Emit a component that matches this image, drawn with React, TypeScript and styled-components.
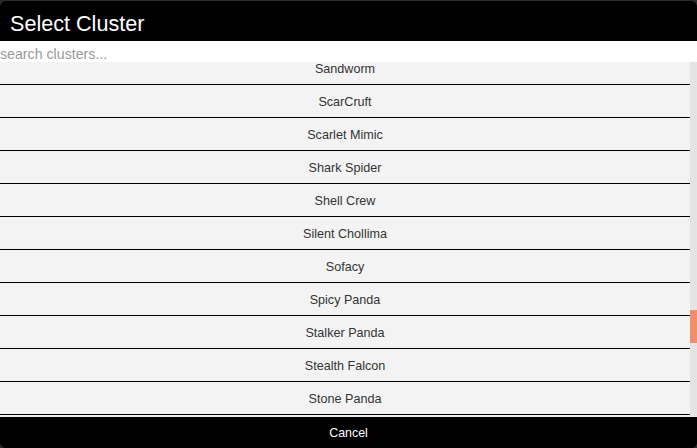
import React, { useEffect, useRef, useState } from 'react';
import styled, { createGlobalStyle } from 'styled-components';

const GlobalStyle = createGlobalStyle`
  html, body {
    margin: 0;
    padding: 0;
    background: #2b2b2b;
    overflow: hidden;
  }
  * {
    box-sizing: border-box;
  }
`;

const CLUSTERS = [
  'APT1', 'APT12', 'APT16', 'APT17', 'APT18', 'APT19', 'APT28', 'APT29', 'APT3', 'APT30',
  'APT32', 'APT33', 'APT34', 'APT37', 'APT38', 'APT39', 'Aquatic Panda', 'Axiom', 'Berserk Bear',
  'BlackOasis', 'BlackTech', 'Blue Termite', 'Bronze Butler', 'Carbanak', 'Charming Kitten',
  'Cleaver', 'Cobalt Group', 'Comment Crew', 'Copy-Kittens', 'Dark Caracal', 'Dark Hotel',
  'Deep Panda', 'DragonOK', 'Dragonfly', 'Dust Storm', 'Elderwood', 'Emissary Panda',
  'Equation Group', 'Fancy Bear', 'FIN10', 'FIN4', 'FIN5', 'FIN6', 'FIN7', 'FIN8', 'Gallmaker',
  'Gamaredon Group', 'Goblin Panda', 'Gorgon Group', 'Group5', 'Hexane', 'Honeybee',
  'Inception Framework', 'Ke3chang', 'Kimsuky', 'Lazarus Group', 'Leafminer', 'Leviathan',
  'Longhorn', 'Machete', 'Magic Hound', 'Menupass', 'Moafee', 'Molerats', 'MuddyWater',
  'Mustang Panda', 'Naikon', 'NEODYMIUM', 'Night Dragon', 'OilRig', 'Operation Wocao',
  'Orangeworm', 'PLATINUM', 'PROMETHIUM', 'Patchwork', 'PittyTiger',
  'Poseidon Group', 'Putter Panda', 'Rancor', 'Rocke', 'RTM', 'Sandworm', 'ScarCruft',
  'Scarlet Mimic', 'Shark Spider', 'Shell Crew', 'Silent Chollima', 'Sofacy', 'Spicy Panda',
  'Stalker Panda', 'Stealth Falcon', 'Stone Panda', 'Strider', 'Suckfly', 'TA459', 'TA505',
  'Taidoor', 'TEMP.Veles', 'The White Company', 'Threat Group-1314', 'Threat Group-3390', 'Thrip',
  'Tick', 'Tonto Team', 'Tropic Trooper', 'Turla', 'Vicious Panda', 'Volatile Cedar', 'Wet Panda',
  'Whitefly', 'Windshift', 'Winnti Group', 'Wizard Spider', 'Xenotime', 'Zebrocy', 'Zirconium',
];

const ROW_HEIGHT = 33;

const Overlay = styled.div`
  height: 448px;
  padding-top: 1px;
`;

const Dialog = styled.div`
  display: flex;
  flex-direction: column;
  height: 447px;
  background: #000;
  border-radius: 6px;
  overflow: hidden;
  font-family: 'Liberation Sans', Arial, sans-serif;
`;

const Header = styled.header`
  display: flex;
  align-items: center;
  height: 40px;
  flex-shrink: 0;
  padding: 5px 10px 0;
  color: #fff;
  font-size: 21.6px;
`;

const SearchInput = styled.input`
  display: block;
  width: 100%;
  height: 21px;
  flex-shrink: 0;
  margin: 0;
  padding: 4px 0 0;
  border: none;
  outline: none;
  background: #fff;
  color: #333;
  font-family: 'Liberation Sans', Arial, sans-serif;
  font-size: 14.2px;

  &::placeholder {
    color: #9a9a9a;
  }
`;

const ListArea = styled.div`
  display: flex;
  flex: 1;
  min-height: 0;
  background: #f3f3f3;
`;

const List = styled.ul`
  flex: 1;
  min-width: 0;
  margin: 0;
  padding: 0;
  list-style: none;
  overflow-y: scroll;
  scrollbar-width: none;

  &::-webkit-scrollbar {
    display: none;
  }
`;

const Track = styled.div`
  position: relative;
  width: 7px;
  flex-shrink: 0;
  background: #e4e4e4;
`;

const Thumb = styled.div`
  position: absolute;
  left: 0;
  right: 0;
  background: #f0906a;
`;

const Row = styled.li`
  display: flex;
  align-items: center;
  justify-content: center;
  height: ${ROW_HEIGHT}px;
  padding-top: 1px;
  border-bottom: 1px solid #000;
  color: #333;
  font-size: 12.6px;
  cursor: pointer;
`;

const Footer = styled.button`
  display: flex;
  align-items: center;
  justify-content: center;
  height: 32px;
  flex-shrink: 0;
  width: 100%;
  margin: 0;
  padding: 1px 0 0;
  border: none;
  border-top: 1px solid #e9e9e9;
  background: #000;
  color: #fff;
  font-family: 'Liberation Sans', Arial, sans-serif;
  font-size: 12.4px;
  cursor: pointer;
`;

export default function App() {
  const [query, setQuery] = useState('');
  const [thumb, setThumb] = useState({ top: 0, height: 0 });
  const listRef = useRef<HTMLUListElement>(null);

  const shown = CLUSTERS.filter((c) => c.toLowerCase().includes(query.toLowerCase()));

  const updateThumb = () => {
    const el = listRef.current;
    if (!el) return;
    const ratio = el.clientHeight / el.scrollHeight;
    setThumb({
      top: el.scrollTop * ratio,
      height: ratio >= 1 ? 0 : el.clientHeight * ratio,
    });
  };

  useEffect(() => {
    const idx = CLUSTERS.indexOf('Sandworm');
    if (listRef.current) listRef.current.scrollTop = idx * ROW_HEIGHT + 10;
    updateThumb();
  }, []);

  useEffect(updateThumb, [query]);

  return (
    <Overlay>
      <GlobalStyle />
      <Dialog>
        <Header>Select Cluster</Header>
        <SearchInput
          placeholder="search clusters..."
          value={query}
          onChange={(e) => setQuery(e.target.value)}
        />
        <ListArea>
          <List ref={listRef} onScroll={updateThumb}>
            {shown.map((name) => (
              <Row key={name}>{name}</Row>
            ))}
          </List>
          <Track>
            <Thumb style={{ top: thumb.top, height: thumb.height }} />
          </Track>
        </ListArea>
        <Footer>Cancel</Footer>
      </Dialog>
    </Overlay>
  );
}
